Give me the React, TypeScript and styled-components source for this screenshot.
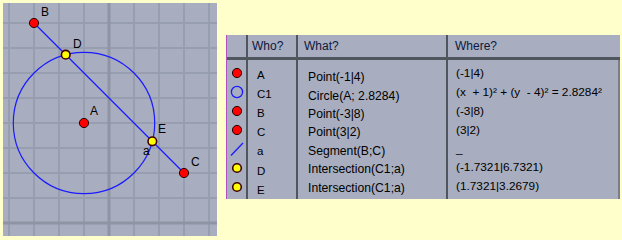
import React from 'react';
import styled, { createGlobalStyle } from 'styled-components';

const GlobalStyle = createGlobalStyle`
  html, body {
    margin: 0;
    padding: 0;
    background: #ffffcc;
  }
  body {
    font-family: "Liberation Sans", Arial, sans-serif;
  }
`;

const Page = styled.div`
  width: 622px;
  height: 240px;
  box-sizing: border-box;
  padding: 3px 0 0 3px;
  display: flex;
  align-items: flex-start;
  background: #ffffcc;
`;

const Canvas = styled.div`
  flex: none;
  width: 214px;
  height: 233px;
  background: #a8aebf;
  overflow: hidden;
`;

const Table = styled.div`
  display: flex;
  width: 393px;
  margin: 32px 0 0 9px;
  border-left: 1px solid #b050c0;
  background: #a8aebf;
`;

const Column = styled.div<{ $width?: number; $divider?: boolean }>`
  box-sizing: border-box;
  flex: ${({ $width }) => ($width ? `0 0 ${$width}px` : '1 1 auto')};
  border-right: ${({ $divider }) => ($divider ? '2px solid #50555e' : 'none')};
`;

const HeaderCell = styled.div<{ $pad: number }>`
  box-sizing: border-box;
  height: 25px;
  padding-left: ${({ $pad }) => $pad}px;
  border-bottom: 3px solid #50555e;
  display: flex;
  align-items: center;
  font-size: 12px;
  color: #0c1840;
`;

const Body = styled.div<{ $padTop: number; $edge?: boolean }>`
  box-sizing: border-box;
  height: 139px;
  padding-top: ${({ $padTop }) => $padTop}px;
  border-right: ${({ $edge }) => ($edge ? '2px solid #7a7d84' : 'none')};
`;

const Cell = styled.div<{ $h: number; $pad: number; $size: number; $center?: boolean }>`
  height: ${({ $h }) => $h}px;
  padding-left: ${({ $pad }) => $pad}px;
  display: flex;
  align-items: center;
  justify-content: ${({ $center }) => ($center ? 'center' : 'flex-start')};
  font-size: ${({ $size }) => $size}px;
  color: #000;
  white-space: pre;
`;

type Kind = 'point' | 'circle' | 'segment' | 'intersect';

const rows: { kind: Kind; who: string; what: string; where: string }[] = [
  { kind: 'point', who: 'A', what: 'Point(-1|4)', where: '(-1|4)' },
  { kind: 'circle', who: 'C1', what: 'Circle(A; 2.8284)', where: '(x  + 1)² + (y  - 4)² = 2.8284²' },
  { kind: 'point', who: 'B', what: 'Point(-3|8)', where: '(-3|8)' },
  { kind: 'point', who: 'C', what: 'Point(3|2)', where: '(3|2)' },
  { kind: 'segment', who: 'a', what: 'Segment(B;C)', where: '_' },
  { kind: 'intersect', who: 'D', what: 'Intersection(C1;a)', where: '(-1.7321|6.7321)' },
  { kind: 'intersect', who: 'E', what: 'Intersection(C1;a)', where: '(1.7321|3.2679)' },
];

const KindIcon = ({ kind }: { kind: Kind }) => (
  <svg width="16" height="16" viewBox="0 0 16 16">
    {kind === 'point' && <circle cx="8" cy="8" r="4.6" fill="#ff0000" stroke="#200000" strokeWidth="1" />}
    {kind === 'circle' && <circle cx="8" cy="8" r="5.6" fill="none" stroke="#1a1aff" strokeWidth="1.3" />}
    {kind === 'segment' && <line x1="2" y1="14.5" x2="14" y2="2" stroke="#1a1aff" strokeWidth="1.3" />}
    {kind === 'intersect' && <circle cx="8" cy="8" r="4.3" fill="#ffff00" stroke="#400000" strokeWidth="1.6" />}
  </svg>
);

// geometry view, origin at (106, 220), 25px per unit
const U = 25;
const OX = 106;
const OY = 220;
const px = (x: number) => OX + x * U;
const py = (y: number) => OY - y * U;

const GeometryView = () => {
  const vLines = [-4, -3, -2, -1, 1, 2, 3, 4];
  const hLines = [1, 2, 3, 4, 5, 6, 7, 8];
  return (
    <svg width="214" height="233" viewBox="0 0 214 233">
      {vLines.map((k) => (
        <line key={`v${k}`} x1={px(k)} y1="0" x2={px(k)} y2="233" stroke="#979eb0" strokeWidth="2" />
      ))}
      {hLines.map((k) => (
        <line key={`h${k}`} x1="0" y1={py(k)} x2="214" y2={py(k)} stroke="#979eb0" strokeWidth="2" />
      ))}
      <line x1={px(0)} y1="0" x2={px(0)} y2="233" stroke="#8e94a4" strokeWidth="3" />
      <line x1="0" y1={py(0)} x2="214" y2={py(0)} stroke="#8e94a4" strokeWidth="3" />

      <circle cx={px(-1)} cy={py(4)} r={2.8284 * U} fill="none" stroke="#1a1aff" strokeWidth="1.2" />
      <line x1={px(-3)} y1={py(8)} x2={px(3)} y2={py(2)} stroke="#1a1aff" strokeWidth="1.2" />

      <circle cx={px(-1)} cy={py(4)} r="4.6" fill="#ff0000" stroke="#200000" strokeWidth="1" />
      <circle cx={px(-3)} cy={py(8)} r="4.6" fill="#ff0000" stroke="#200000" strokeWidth="1" />
      <circle cx={px(3)} cy={py(2)} r="4.6" fill="#ff0000" stroke="#200000" strokeWidth="1" />
      <circle cx={px(-1.7321)} cy={py(6.7321)} r="4.3" fill="#ffff00" stroke="#400000" strokeWidth="1.6" />
      <circle cx={px(1.7321)} cy={py(3.2679)} r="4.3" fill="#ffff00" stroke="#400000" strokeWidth="1.6" />

      <g fontFamily="'Liberation Sans', Arial, sans-serif" fontSize="12" fill="#000">
        <text x="38" y="13">B</text>
        <text x="70" y="45">D</text>
        <text x="87" y="112">A</text>
        <text x="155" y="130">E</text>
        <text x="140" y="152">a</text>
        <text x="188" y="163">C</text>
      </g>
    </svg>
  );
};

const App = () => (
  <>
    <GlobalStyle />
    <Page>
      <Canvas>
        <GeometryView />
      </Canvas>
      <Table>
        <Column $width={21} $divider>
          <HeaderCell $pad={0} />
          <Body $padTop={3}>
            {rows.map((r) => (
              <Cell key={r.who} $h={19} $pad={0} $size={12} $center>
                <KindIcon kind={r.kind} />
              </Cell>
            ))}
          </Body>
        </Column>
        <Column $width={50} $divider>
          <HeaderCell $pad={4}>Who?</HeaderCell>
          <Body $padTop={5}>
            {rows.map((r) => (
              <Cell key={r.who} $h={19.2} $pad={9} $size={11.5}>
                {r.who}
              </Cell>
            ))}
          </Body>
        </Column>
        <Column $width={150} $divider>
          <HeaderCell $pad={6}>What?</HeaderCell>
          <Body $padTop={8}>
            {rows.map((r) => (
              <Cell key={r.who} $h={18.4} $pad={10} $size={12.2}>
                {r.what}
              </Cell>
            ))}
          </Body>
        </Column>
        <Column>
          <HeaderCell $pad={7}>Where?</HeaderCell>
          <Body $padTop={4} $edge>
            {rows.map((r) => (
              <Cell key={r.who} $h={18.8} $pad={8} $size={11.8}>
                {r.where}
              </Cell>
            ))}
          </Body>
        </Column>
      </Table>
    </Page>
  </>
);

export default App;
